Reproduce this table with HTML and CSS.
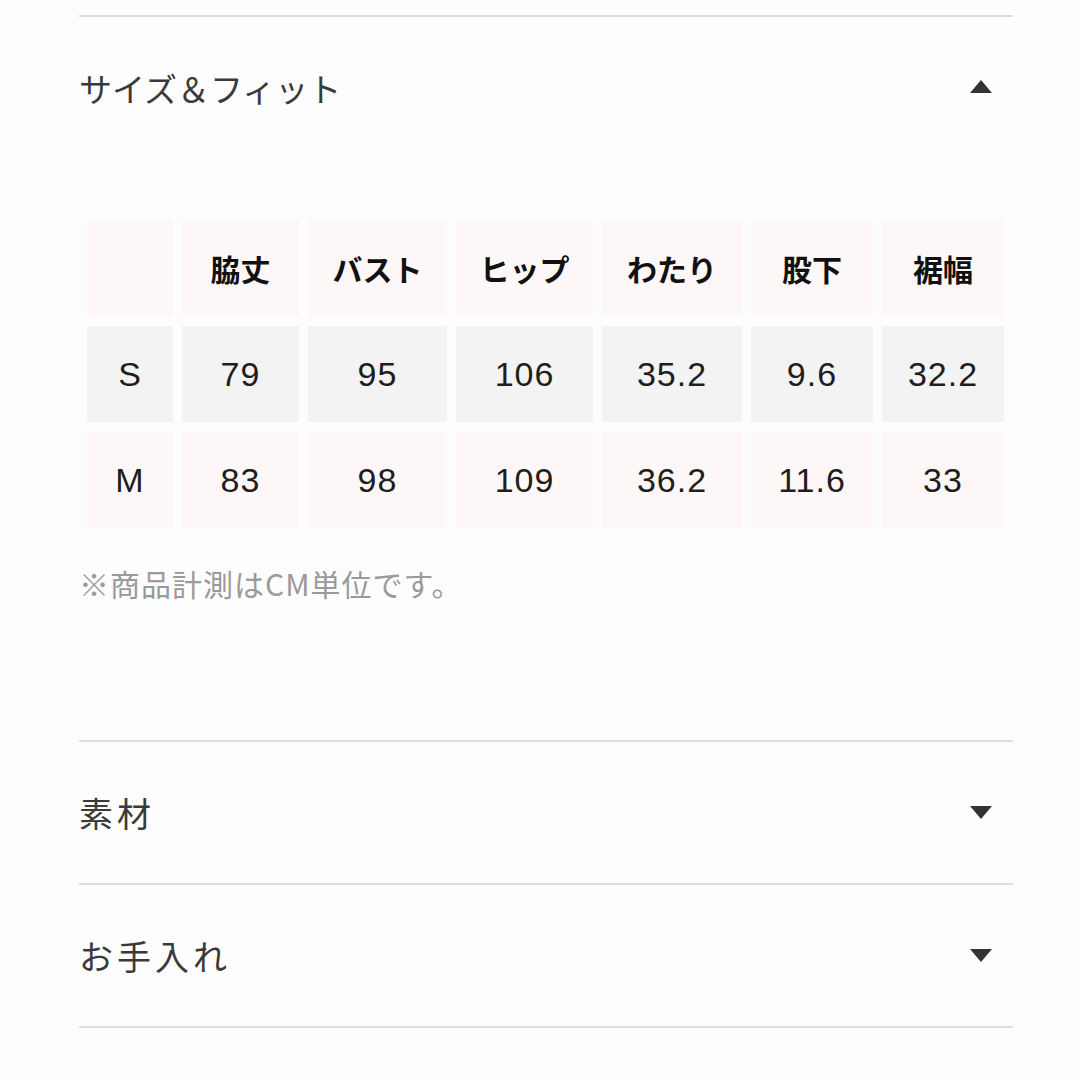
FILE: index.html
```html
<!DOCTYPE html>
<html lang="ja">
<head>
<meta charset="utf-8">
<link rel="stylesheet" href="styles.css">
</head>
<body>
<div class="page">
  <section class="acc open">
    <div class="acc-head">
      <span class="acc-title acc-title-tight">サイズ＆フィット</span>
      <span class="tri up"></span>
    </div>
    <div class="acc-body">
      <table class="size-table">
        <colgroup>
          <col style="width:86px"><col style="width:117px"><col style="width:139px"><col style="width:137px"><col style="width:140px"><col style="width:122px"><col style="width:122px">
        </colgroup>
        <tr class="row-head">
          <th></th><th>脇丈</th><th>バスト</th><th>ヒップ</th><th>わたり</th><th>股下</th><th>裾幅</th>
        </tr>
        <tr class="row-grey">
          <td>S</td><td>79</td><td>95</td><td>106</td><td>35.2</td><td>9.6</td><td>32.2</td>
        </tr>
        <tr class="row-pink">
          <td>M</td><td>83</td><td>98</td><td>109</td><td>36.2</td><td>11.6</td><td>33</td>
        </tr>
      </table>
      <p class="note">※商品計測はCM単位です。</p>
    </div>
  </section>
  <section class="acc">
    <div class="acc-head">
      <span class="acc-title">素材</span>
      <span class="tri down"></span>
    </div>
  </section>
  <section class="acc">
    <div class="acc-head">
      <span class="acc-title">お手入れ</span>
      <span class="tri down"></span>
    </div>
  </section>
  <div class="end-line"></div>
</div>
</body>
</html>
```

FILE: styles.css
```css
html, body {
  margin: 0;
  padding: 0;
  background: #fdfdfd;
}
body {
  font-family: "Liberation Sans", "Noto Sans CJK JP", sans-serif;
  color: #333;
}
.page {
  margin-left: 79px;
  width: 934px;
  padding-top: 15px;
}
.acc {
  border-top: 2px solid #dedede;
}
.acc-head {
  height: 141px;
  display: flex;
  align-items: center;
  justify-content: space-between;
  padding-right: 21px;
}
.acc-title {
  font-family: "Noto Sans CJK JP", sans-serif;
  font-size: 34px;
  letter-spacing: 4px;
  color: #3a3a3a;
  font-weight: 400;
}
.acc-title-tight {
  font-size: 33px;
  letter-spacing: 0;
}
.tri {
  width: 0;
  height: 0;
  border-left: 11px solid transparent;
  border-right: 11px solid transparent;
}
.tri.up {
  border-bottom: 13px solid #333;
  margin-top: -3px;
}
.tri.down {
  border-top: 13px solid #333;
}
.acc-body {
  padding-top: 52px;
  padding-bottom: 137px;
}
.size-table {
  table-layout: fixed;
  width: 935px;
  margin-left: -1px;
  border-collapse: separate;
  border-spacing: 9px 10px;
}
.size-table th,
.size-table td {
  height: 96px;
  padding: 0;
  text-align: center;
  vertical-align: middle;
}
.size-table th {
  font-family: "Noto Sans CJK JP", sans-serif;
  font-weight: 700;
  font-size: 30px;
  color: #111;
}
.size-table td {
  font-size: 34px;
  letter-spacing: 1px;
  color: #1e1e1e;
}
.row-head th,
.row-pink td {
  background: #fdf8f7;
}
.row-grey td {
  background: #f3f3f3;
}
.note {
  margin: 25px 0 0;
  font-family: "Noto Sans CJK JP", sans-serif;
  font-size: 30px;
  line-height: 40px;
  letter-spacing: 1px;
  color: #9a9a9a;
}
.end-line {
  border-top: 2px solid #dedede;
  height: 60px;
}
```
